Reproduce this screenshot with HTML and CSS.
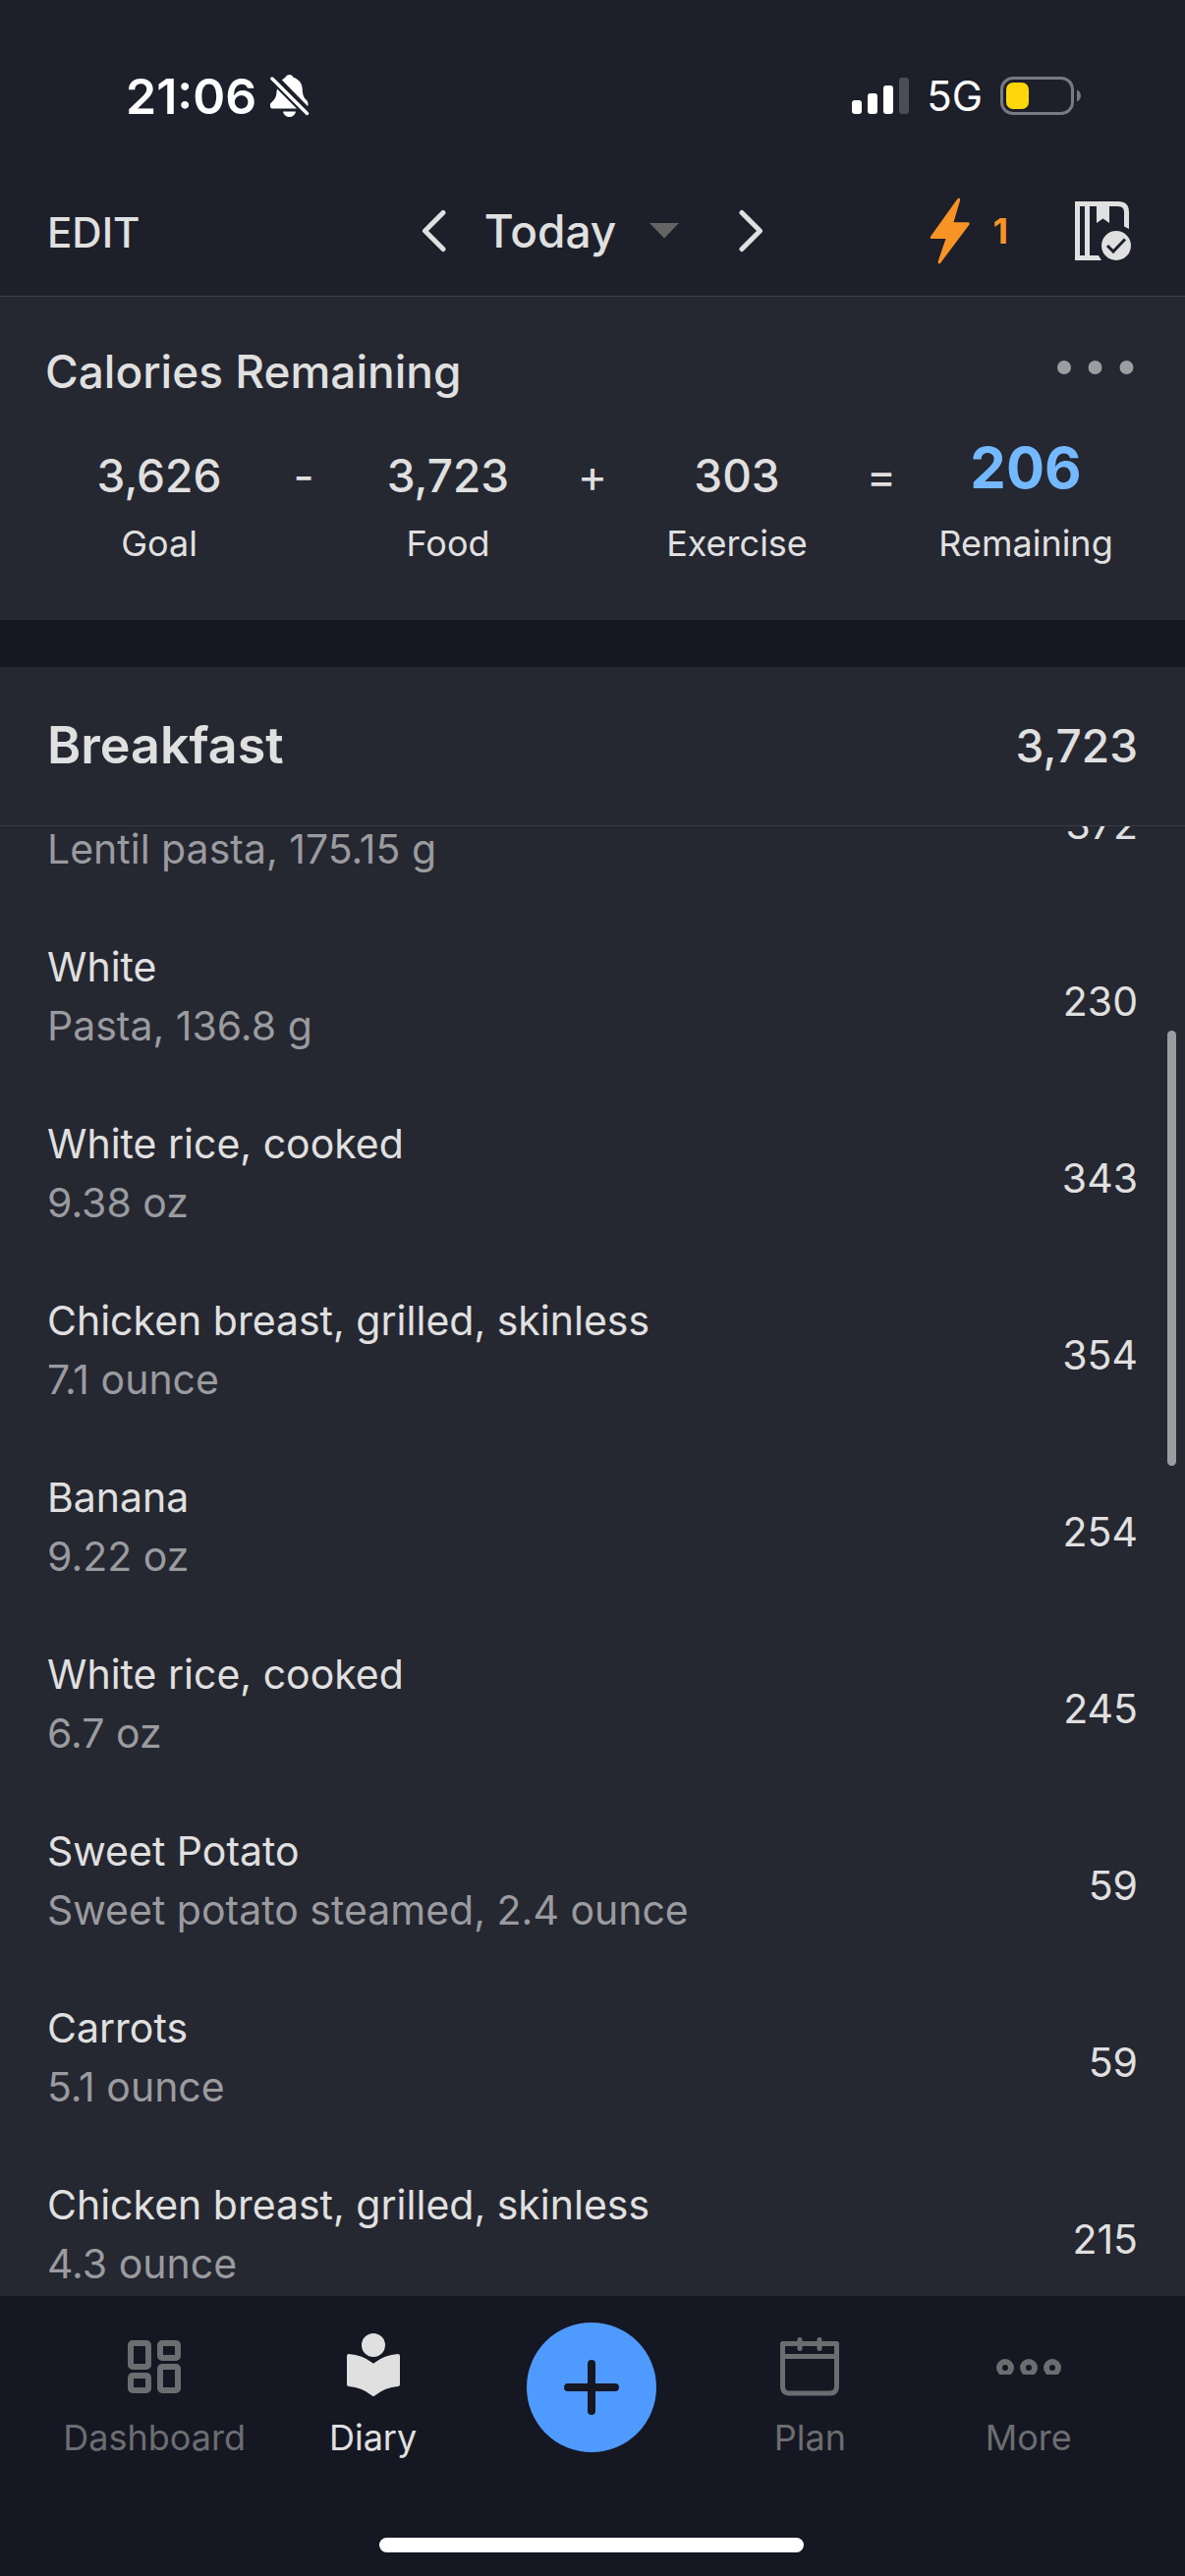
FILE: index.html
```html
<!DOCTYPE html>
<html lang="en">
<head>
<meta charset="utf-8">
<meta name="viewport" content="width=device-width, initial-scale=1">
<title>Diary</title>
<link rel="stylesheet" href="styles.css">
</head>
<body>
<div class="app">
  <div class="status">
    <div class="status__group">
      <span class="status__time">21:06</span>
      <svg class="icon" width="40" height="44" viewBox="0 0 40 44" fill="#fff" aria-hidden="true">
        <path d="M12 5.500C13.500 4 14.500 3.600 15.500 2.800C16.300 1 17.600 0 19.500 0S22.700 1 23.500 2.800C29.500 4.800 32.500 9 32.800 15C33 20.500 34 23.500 37.500 26.500C38.500 28 38.800 30 38.300 32.200Z"/>
        <path d="M7 14.500L27 34.500H3C-.5 34.500-.8 31-.2 30C1.500 27.500 5 25.500 6 21.500C6.500 19 6.500 17 7 14.500Z"/>
        <path d="M13 37.500H26C25.500 41 22.500 43 19.500 43S13.500 41 13 37.500Z"/>
        <path d="M2 4L37.500 39.500" stroke="#fff" stroke-width="3.400" stroke-linecap="round"/>
      </svg>
    </div>
    <div class="status__group status__group--right">
      <svg class="icon" width="58" height="38" viewBox="0 0 58 38" fill="#fff" aria-hidden="true">
        <rect x="0" y="23" width="10" height="14" rx="3"/>
        <rect x="16" y="16" width="10" height="21" rx="3"/>
        <rect x="32" y="8" width="10" height="29" rx="3"/>
        <rect x="48" y="0" width="10" height="37" rx="3" fill="#4b4d57"/>
      </svg>
      <span class="status__net">5G</span>
      <svg class="icon" width="82" height="40" viewBox="0 0 82 40" aria-hidden="true">
        <rect x="1.500" y="1.500" width="72" height="36" rx="11.500" fill="none" stroke="#787981" stroke-width="3"/>
        <rect x="6" y="6" width="23" height="27" rx="7" fill="#ffd60a"/>
        <path d="M78 13.500C80.500 14.500 82 17 82 19.500S80.500 24.500 78 25.500Z" fill="#787981"/>
      </svg>
    </div>
  </div>

  <header class="topbar">
    <button class="topbar__edit" type="button">EDIT</button>
    <div class="topbar__date">
      <button class="plain" type="button" aria-label="Previous day">
        <svg class="icon" width="26" height="44" viewBox="0 0 26 44" fill="none" stroke="#e0e0e0" stroke-width="5" stroke-linecap="round" stroke-linejoin="round"><path d="M22 3.500L3.500 22L22 40.500"/></svg>
      </button>
      <button class="topbar__today" type="button">Today
        <svg class="icon" width="30" height="16" viewBox="0 0 30 16" fill="#646464"><path d="M0 0H30L15 15.500Z"/></svg>
      </button>
      <button class="plain" type="button" aria-label="Next day">
        <svg class="icon" width="26" height="44" viewBox="0 0 26 44" fill="none" stroke="#e0e0e0" stroke-width="5" stroke-linecap="round" stroke-linejoin="round"><path d="M4 3.500L22.500 22L4 40.500"/></svg>
      </button>
    </div>
    <div class="topbar__actions">
      <button class="topbar__streak" type="button">
        <svg class="icon" width="42" height="68" viewBox="0 0 42 68" fill="#f79425"><path d="M28 2L1.200 39.500C.3 40.800.8 42 2.200 42H16.500L8.700 65C8.200 67.600 10 68.200 11.300 66.500L40.200 28C41.200 26.600 40.600 25.200 39 25.200H24.500L31.200 2.800C31.500.5 29.300-.2 28 2Z"/></svg>
        1
      </button>
      <button class="plain" type="button" aria-label="Complete diary">
        <svg class="icon" width="58" height="60" viewBox="0 0 58 60">
          <path fill="#e0e0e0" fill-rule="evenodd" d="M0 0H44Q55 0 55 11V28L50 25.500V11Q50 5 44 5H35V22L28.500 17.500L22 22V5H15V55H24L27 60H0ZM5 5V55H10V5Z"/>
          <circle cx="42" cy="45" r="15" fill="#e0e0e0"/>
          <path d="M33 45L39 51L51 38.500" fill="none" stroke="#1d1f2a" stroke-width="3"/>
        </svg>
      </button>
    </div>
  </header>

  <section class="summary">
    <div class="summary__head">
      <h2 class="summary__title">Calories Remaining</h2>
      <button class="summary__more" type="button" aria-label="Options">
        <svg class="icon" width="78" height="14" viewBox="0 0 78 14" fill="#9c9da1"><circle cx="7" cy="7" r="7"/><circle cx="38.500" cy="7" r="7"/><circle cx="70.500" cy="7" r="7"/></svg>
      </button>
    </div>
    <div class="sum">
      <div class="sum__item"><span class="sum__value">3,626</span><span class="sum__label">Goal</span></div>
      <span class="sum__op">-</span>
      <div class="sum__item"><span class="sum__value">3,723</span><span class="sum__label">Food</span></div>
      <span class="sum__op">+</span>
      <div class="sum__item"><span class="sum__value">303</span><span class="sum__label">Exercise</span></div>
      <span class="sum__op">=</span>
      <div class="sum__item"><span class="sum__value sum__value--total">206</span><span class="sum__label">Remaining</span></div>
    </div>
  </section>

  <main class="meal">
    <div class="meal__head">
      <h1 class="meal__title">Breakfast</h1>
      <span class="meal__total">3,723</span>
    </div>
    <div class="meal__scroll">
      <ul class="foods">
        <li class="food"><div class="food__info"><span class="food__detail">Lentil pasta, 175.15 g</span></div><span class="food__kcal">372</span></li>
        <li class="food"><div class="food__info"><span class="food__name">White</span><span class="food__detail">Pasta, 136.8 g</span></div><span class="food__kcal">230</span></li>
        <li class="food"><div class="food__info"><span class="food__name">White rice, cooked</span><span class="food__detail">9.38 oz</span></div><span class="food__kcal">343</span></li>
        <li class="food"><div class="food__info"><span class="food__name">Chicken breast, grilled, skinless</span><span class="food__detail">7.1 ounce</span></div><span class="food__kcal">354</span></li>
        <li class="food"><div class="food__info"><span class="food__name">Banana</span><span class="food__detail">9.22 oz</span></div><span class="food__kcal">254</span></li>
        <li class="food"><div class="food__info"><span class="food__name">White rice, cooked</span><span class="food__detail">6.7 oz</span></div><span class="food__kcal">245</span></li>
        <li class="food"><div class="food__info"><span class="food__name">Sweet Potato</span><span class="food__detail">Sweet potato steamed, 2.4 ounce</span></div><span class="food__kcal">59</span></li>
        <li class="food"><div class="food__info"><span class="food__name">Carrots</span><span class="food__detail">5.1 ounce</span></div><span class="food__kcal">59</span></li>
        <li class="food"><div class="food__info"><span class="food__name">Chicken breast, grilled, skinless</span><span class="food__detail">4.3 ounce</span></div><span class="food__kcal">215</span></li>
      </ul>
      <div class="meal__thumb"></div>
    </div>
  </main>

  <footer class="dock">
    <nav class="tabs">
      <a class="tab" href="#dashboard">
        <svg class="tab__icon" width="72" height="72" viewBox="0 0 72 72" fill="none" stroke="#6c6d70" stroke-width="6"><rect x="12" y="12" width="18" height="24" rx="2"/><rect x="42" y="12" width="18" height="15" rx="2"/><rect x="12" y="45" width="18" height="15" rx="2"/><rect x="42" y="36" width="18" height="24" rx="2"/></svg>
        Dashboard
      </a>
      <a class="tab tab--active" href="#diary" aria-current="page">
        <svg class="tab__icon" width="72" height="72" viewBox="0 0 72 72" fill="#e0e0e0"><circle cx="36" cy="14" r="12"/><path d="M11 23Q9 23 9 25V54Q9 56 11 56Q24 57 34 65Q36 67 38 65Q48 57 61 56Q63 56 63 54V25Q63 23 61 23Q47 24 37 32Q36 33 35 32Q25 24 11 23Z"/></svg>
        Diary
      </a>
      <button class="add" type="button" aria-label="Add">
        <svg class="icon" width="56" height="56" viewBox="0 0 56 56" fill="none" stroke="#151722" stroke-width="8" stroke-linecap="round"><path d="M28 4V52M4 28H52"/></svg>
      </button>
      <a class="tab" href="#plan">
        <svg class="tab__icon" width="72" height="72" viewBox="0 0 72 72" fill="none" stroke="#6c6d70" stroke-width="5"><path d="M8.500 12.500H63.500V56Q63.500 63 56.500 63H15.500Q8.500 63 8.500 56ZM8.500 25.500H63.500" stroke-linejoin="round"/><path d="M26 8.500V17.500M46 8.500V17.500" stroke-linecap="round"/></svg>
        Plan
      </a>
      <a class="tab" href="#more">
        <svg class="tab__icon" width="72" height="72" viewBox="0 0 72 72" fill="none" stroke="#6c6d70" stroke-width="6"><svg width="72" height="44"><circle cx="12" cy="37" r="6"/><circle cx="36" cy="37" r="6"/><circle cx="60" cy="37" r="6"/></svg></svg>
        More
      </a>
    </nav>
    <div class="home"></div>
  </footer>
</div>
</body>
</html>
```
FILE: styles.css
```css
* {
  box-sizing: border-box;
}

body {
  margin: 0;
  background: #151722;
  color: #e0e0e0;
  font-family: Inter, "Liberation Sans", sans-serif;
}

button {
  display: flex;
  align-items: center;
  margin: 0;
  padding: 0;
  border: 0;
  background: none;
  color: inherit;
  font: inherit;
  cursor: pointer;
}

h1,
h2,
ul {
  margin: 0;
  padding: 0;
}

.icon {
  display: block;
  flex: none;
}

.app {
  display: flex;
  flex-direction: column;
  height: 100vh;
}

/* Status bar */
.status {
  display: flex;
  justify-content: space-between;
  align-items: center;
  padding: 68px 106px 22px 128px;
  background: #1d1f2a;
  color: #fff;
}

.status__group {
  display: flex;
  align-items: center;
  gap: 14px;
}

.status__group--right {
  gap: 18px;
}

.status__time {
  font-size: 50px;
  line-height: 60px;
  font-weight: 600;
}

.status__net {
  font-size: 42px;
  line-height: 60px;
}

/* Top bar */
.topbar {
  display: grid;
  grid-template-columns: 1fr auto 1fr;
  align-items: center;
  height: 152px;
  padding: 18px 48px 0;
  border-bottom: 1px solid #41434e;
  background: #1d1f2a;
}

.topbar__edit {
  padding-top: 4px;
  font-size: 42px;
  line-height: 60px;
  font-weight: 500;
}

.topbar__date {
  display: flex;
  align-items: center;
  gap: 38px;
}

.topbar__today {
  gap: 34px;
  padding-right: 22px;
  font-size: 46px;
  line-height: 60px;
  font-weight: 500;
}

.topbar__actions {
  display: flex;
  align-items: center;
  justify-content: flex-end;
  gap: 68px;
  padding-right: 6px;
}

.topbar__streak {
  gap: 22px;
  color: #f79425;
  font-size: 36px;
  line-height: 60px;
  font-weight: 700;
}

/* Calorie summary */
.summary {
  padding: 42px 44px 54px;
  background: #252731;
}

.summary__head {
  display: flex;
  justify-content: space-between;
  align-items: center;
  padding: 0 8px 0 2px;
}

.summary__title {
  font-size: 46px;
  line-height: 68px;
  font-weight: 500;
}

.summary__more {
  padding-bottom: 8px;
}

.sum {
  display: grid;
  grid-template-columns: 1fr 58px 1fr 58px 1fr 58px 1fr;
  padding-top: 30px;
  text-align: center;
}

.sum__item {
  display: flex;
  flex-direction: column;
  gap: 3px;
}

.sum__value,
.sum__op {
  font-size: 46px;
  line-height: 84px;
  font-weight: 500;
}

.sum__op {
  font-weight: 400;
}

.sum__value--total {
  padding-bottom: 16px;
  color: #74b9ff;
  font-size: 58px;
  line-height: 68px;
  font-weight: 700;
}

.sum__label {
  font-size: 36px;
  line-height: 48px;
}

/* Meal */
.meal {
  display: flex;
  flex: 1;
  flex-direction: column;
  min-height: 0;
  margin-top: 48px;
  background: #252731;
}

.meal__head {
  display: flex;
  justify-content: space-between;
  align-items: center;
  padding: 46px 48px 47px;
  border-bottom: 1px solid #393b45;
}

.meal__title {
  font-size: 52px;
  line-height: 68px;
  font-weight: 600;
}

.meal__total {
  font-size: 46px;
  line-height: 68px;
  font-weight: 500;
}

.meal__scroll {
  position: relative;
  flex: 1;
  min-height: 0;
  overflow: hidden;
}

.foods {
  margin-top: -97px;
  list-style: none;
}

.food {
  display: flex;
  justify-content: space-between;
  align-items: center;
  height: 180px;
  padding: 0 48px;
  font-size: 41px;
  line-height: 60px;
}

.food__info {
  display: flex;
  flex-direction: column;
  justify-content: flex-end;
  min-height: 120px;
}

.food__detail {
  color: #9a9b9f;
}

.food__kcal {
  padding-top: 10px;
}

.meal__thumb {
  position: absolute;
  top: 208px;
  right: 9px;
  width: 9px;
  height: 443px;
  border-radius: 5px;
  background: #9b9ca1;
}

/* Bottom navigation */
.dock {
  padding: 27px 48px 24px 46px;
  background: #151722;
}

.tabs {
  display: grid;
  grid-template-columns: repeat(5, 1fr);
  justify-items: center;
  align-items: start;
}

.tab {
  display: flex;
  flex-direction: column;
  align-items: center;
  gap: 12px;
  padding-top: 9px;
  color: #6c6d70;
  font-size: 36px;
  line-height: 48px;
  text-decoration: none;
}

.tab--active {
  color: #e0e0e0;
}

.tab__icon {
  display: block;
}

.add {
  justify-content: center;
  width: 132px;
  height: 132px;
  border-radius: 50%;
  background: #4f9aff;
}

.home {
  width: 432px;
  height: 15px;
  margin: 78px auto 0;
  border-radius: 8px;
  background: #fff;
}
```
